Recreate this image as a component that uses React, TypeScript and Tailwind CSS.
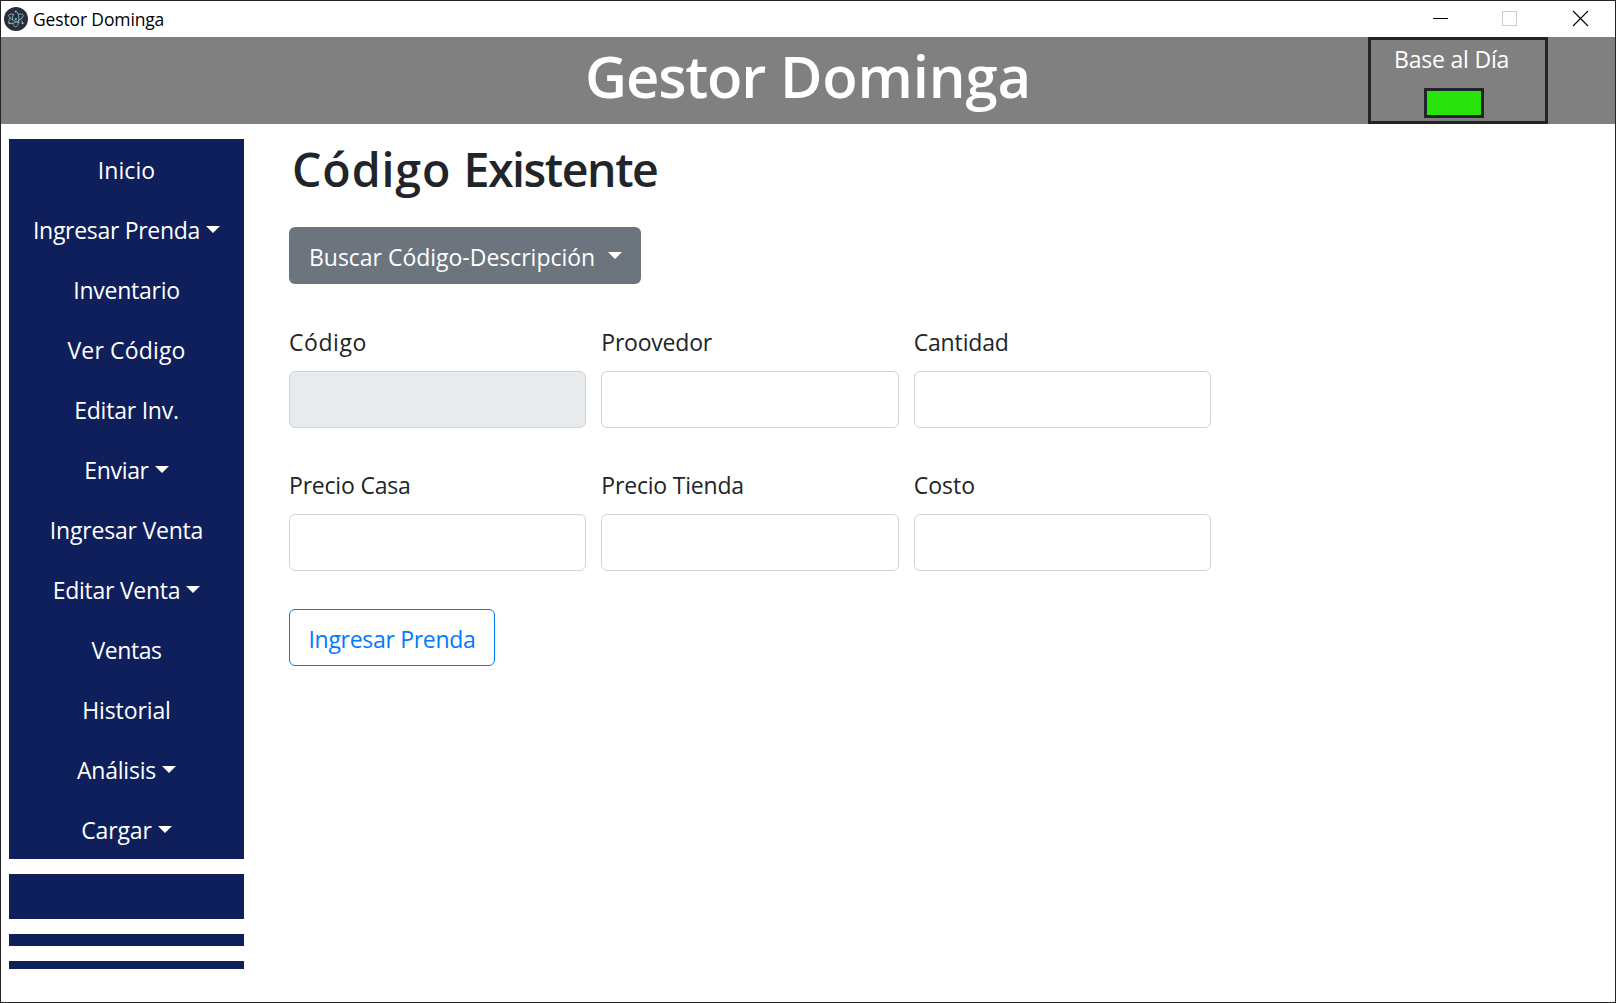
import React from "react";

type NavItem = { label: string; tracking: string; menu?: boolean };

const navItems: NavItem[] = [
  { label: "Inicio", tracking: "tracking-[0.05px]" },
  { label: "Ingresar Prenda", tracking: "tracking-[-0.3px]", menu: true },
  { label: "Inventario", tracking: "tracking-[-0.25px]" },
  { label: "Ver Código", tracking: "tracking-[0.15px]" },
  { label: "Editar Inv.", tracking: "tracking-[-0.22px]" },
  { label: "Enviar", tracking: "tracking-[-0.35px]", menu: true },
  { label: "Ingresar Venta", tracking: "tracking-[-0.2px]" },
  { label: "Editar Venta", tracking: "tracking-[-0.25px]", menu: true },
  { label: "Ventas", tracking: "tracking-[-0.45px]" },
  { label: "Historial", tracking: "tracking-[-0.1px]" },
  { label: "Análisis", tracking: "tracking-[-0.24px]", menu: true },
  { label: "Cargar", tracking: "tracking-[-0.15px]", menu: true },
];

type FormField = { label: string; tracking: string; disabled?: boolean };

const fields: FormField[] = [
  { label: "Código", tracking: "tracking-[0.55px]", disabled: true },
  { label: "Proovedor", tracking: "tracking-[-0.22px]" },
  { label: "Cantidad", tracking: "tracking-[-0.15px]" },
  { label: "Precio Casa", tracking: "tracking-[-0.2px]" },
  { label: "Precio Tienda", tracking: "tracking-[-0.2px]" },
  { label: "Costo", tracking: "tracking-[0.02px]" },
];

function Caret({ className }: { className: string }) {
  return (
    <span
      className={`inline-block border-x-[7.2px] border-t-[7.2px] border-x-transparent border-t-white ${className}`}
    />
  );
}

function AppLogo() {
  return (
    <svg className="h-6 w-6 shrink-0" viewBox="0 0 24 24" fill="none">
      <circle cx="12" cy="12" r="12" fill="#2b2e3a" />
      <g stroke="#9fd5df" strokeOpacity="0.8" strokeWidth="0.9" strokeLinecap="round">
        <path d="M9.500 7.300C7 6.800 5.100 7.100 4.700 8c-.6 1.300 1.600 3.700 5.100 5.600 1.900 1.100 3.800 1.800 5.400 2.100" />
        <path d="M7 10.300c-1.900 2-2.700 3.800-2.300 4.700M6.500 16.500c1.700.2 4.300-.7 7-2.200 1.900-1.100 3.500-2.300 4.600-3.500" />
        <path d="M8.500 16c.8 2.400 2 3.900 3.200 3.900 1.600 0 2.900-3 3.100-7 .1-1.800 0-3.500-.4-5" />
        <path d="M12.600 4.700c.6.600 1.100 1.400 1.500 2.500M14.300 7.200c2.400-.4 4.300-.2 4.900.7.500.9-.4 2.500-2.100 4.100M17.600 13.800c.8 1 1.200 1.700 1.200 2.300" />
        <path d="M9.300 7.500C8.700 9.100 8.500 10.800 8.500 12.800" />
      </g>
      <circle cx="11.900" cy="12" r="0.900" fill="#9fd5df" />
      <g fill="#9fd5df" fillOpacity="0.85">
        <circle cx="11.700" cy="4.500" r="1" />
        <circle cx="5.400" cy="16.100" r="1.050" />
        <circle cx="18.500" cy="16.300" r="1.050" />
      </g>
    </svg>
  );
}

function TitleBar() {
  return (
    <div className="flex h-9 items-center justify-between bg-white pl-[3px] text-black">
      <div className="flex items-center gap-[5px]">
        <AppLogo />
        <span className="text-[17.5px] leading-6 tracking-[-0.14px]">Gestor Dominga</span>
      </div>
      <svg className="h-9 w-[208px]" viewBox="0 0 208 36" fill="none" shapeRendering="crispEdges">
        <path d="M26 17.500h15" stroke="#000" />
        <rect x="95.500" y="10.500" width="14" height="14" stroke="#ccc" />
        <path
          d="M166 10l15 15M181 10l-15 15"
          stroke="#000"
          strokeWidth="1.100"
          shapeRendering="geometricPrecision"
        />
      </svg>
    </div>
  );
}

function Header() {
  return (
    <header className="relative flex h-[87px] justify-center bg-[#808080] text-white">
      <h1 className="pt-[1px] text-[58px] leading-[76px] font-semibold tracking-[-0.15px]">
        <span className="tracking-[-1.2px]">Gestor</span> Dominga
      </h1>
      <div className="absolute top-0 right-[67px] h-[87px] w-[180px] border-3 border-[#212529]">
        <p className="pt-[1px] pl-[23px] text-[23px] leading-9 tracking-[-0.2px]">Base al Día</p>
        <div className="mt-[11px] ml-[53px] h-[30px] w-[60px] border-3 border-[#212529] bg-[#28e40c]" />
      </div>
    </header>
  );
}

function Sidebar() {
  return (
    <aside className="flex w-[235px] shrink-0 flex-col gap-[15px]">
      <nav className="bg-[#0e1f5b] text-[23px] text-white">
        {navItems.map((item) => (
          <a key={item.label} className="block h-[60px] pt-[1px] text-center leading-[60px]">
            <span className={item.tracking}>{item.label}</span>
            {item.menu && <Caret className="ml-[6px] align-[6px]" />}
          </a>
        ))}
      </nav>
      <div className="h-[45px] bg-[#0e1f5b]" />
      <div className="h-3 bg-[#0e1f5b]" />
      <div className="h-2 bg-[#0e1f5b]" />
    </aside>
  );
}

function Field({ field }: { field: FormField }) {
  return (
    <label className="block">
      <span className={`block h-12 text-[23px] leading-[39px] ${field.tracking}`}>{field.label}</span>
      <input
        disabled={field.disabled}
        className="block h-[57px] w-full rounded-md border border-[#ced4da] bg-white px-[18px] disabled:bg-[#e7ebee]"
      />
    </label>
  );
}

function StockForm() {
  return (
    <main className="w-[922px] text-[#212529]">
      <h2 className="h-[62px] pl-[3px] text-[46.5px] leading-[60px] font-semibold">
        <span className="tracking-[0.9px]">Código</span>{" "}
        <span className="tracking-[-1.45px]">Existente</span>
      </h2>
      <button className="mt-[26px] flex h-[57px] w-[352px] items-center rounded-md bg-[#6c757d] pl-5 text-[23px] text-white">
        <span className="pt-[3px] tracking-[-0.02px]">Buscar Código-Descripción</span>
        <Caret className="ml-[13px]" />
      </button>
      <div className="mt-[39px] grid grid-cols-3 gap-x-[15px] gap-y-[38px]">
        {fields.map((field) => (
          <Field key={field.label} field={field} />
        ))}
      </div>
      <button className="mt-[38px] flex h-[57px] w-[206px] items-center justify-center rounded-md border border-[#007bff] text-[23px] text-[#007bff]">
        <span className="pt-[3px] tracking-[-0.3px]">Ingresar Prenda</span>
      </button>
    </main>
  );
}

export default function App() {
  return (
    <div className="h-[1003px] w-[1616px] overflow-hidden border border-[#252326] bg-white font-['Open_Sans',sans-serif]">
      <TitleBar />
      <Header />
      <div className="flex gap-[45px] pt-[15px] pl-2">
        <Sidebar />
        <StockForm />
      </div>
    </div>
  );
}
